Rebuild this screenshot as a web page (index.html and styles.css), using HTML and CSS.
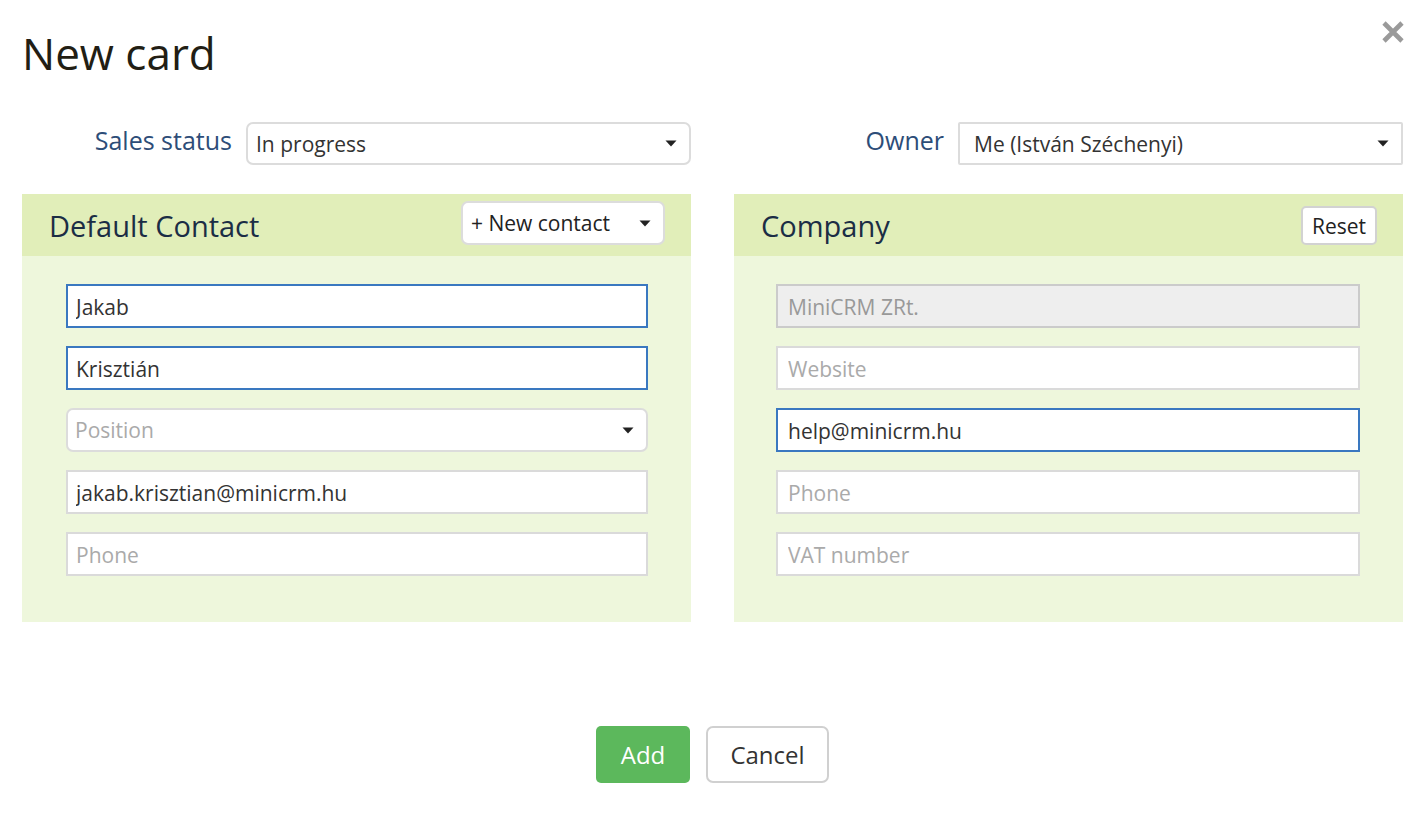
FILE: index.html
```html
<!DOCTYPE html>
<html lang="en">
<head>
<meta charset="utf-8">
<title>New card</title>
<link rel="stylesheet" href="styles.css">
</head>
<body>
<div class="modal">
  <button class="close" aria-label="Close">
    <svg width="24" height="24" viewBox="0 0 24 24"><path d="M3 3 L21 21 M21 3 L3 21" stroke="#9a9a9a" stroke-width="4.6" stroke-linecap="butt"/></svg>
  </button>
  <h1 class="title">New card</h1>

  <div class="top-row">
    <div class="field-group">
      <label class="field-label">Sales status</label>
      <div class="select select-round">
        <span class="select-text">In progress</span>
        <svg class="caret" width="12" height="7" viewBox="0 0 12 7"><path d="M0.5 0.5 H11.5 L6 6.5 Z" fill="#222"/></svg>
      </div>
    </div>
    <div class="field-group">
      <label class="field-label">Owner</label>
      <div class="select select-square">
        <span class="select-text">Me (István Széchenyi)</span>
        <svg class="caret" width="12" height="7" viewBox="0 0 12 7"><path d="M0.5 0.5 H11.5 L6 6.5 Z" fill="#222"/></svg>
      </div>
    </div>
  </div>

  <div class="panels">
    <section class="panel panel-contact">
      <header class="panel-head">
        <h2 class="panel-title">Default Contact</h2>
        <div class="btn-dropdown">
          <span>+ New contact</span>
          <svg class="caret" width="12" height="7" viewBox="0 0 12 7"><path d="M0.5 0.5 H11.5 L6 6.5 Z" fill="#222"/></svg>
        </div>
      </header>
      <div class="panel-body">
        <input class="inp focus" type="text" value="Jakab">
        <input class="inp focus" type="text" value="Krisztián">
        <div class="select select-round inp-select">
          <span class="select-text placeholder">Position</span>
          <svg class="caret" width="12" height="7" viewBox="0 0 12 7"><path d="M0.5 0.5 H11.5 L6 6.5 Z" fill="#222"/></svg>
        </div>
        <input class="inp" type="text" value="jakab.krisztian@minicrm.hu">
        <input class="inp" type="text" placeholder="Phone">
      </div>
    </section>

    <section class="panel panel-company">
      <header class="panel-head">
        <h2 class="panel-title">Company</h2>
        <button class="btn-reset">Reset</button>
      </header>
      <div class="panel-body">
        <input class="inp disabled" type="text" value="MiniCRM ZRt." disabled>
        <input class="inp" type="text" placeholder="Website">
        <input class="inp focus" type="text" value="help@minicrm.hu">
        <input class="inp" type="text" placeholder="Phone">
        <input class="inp" type="text" placeholder="VAT number">
      </div>
    </section>
  </div>

  <div class="actions">
    <button class="btn btn-add">Add</button>
    <button class="btn btn-cancel">Cancel</button>
  </div>
</div>
</body>
</html>
```

FILE: styles.css
```css
* { box-sizing: border-box; }

body {
  margin: 0;
  background: #fff;
  font-family: "Open Sans", "Noto Sans", sans-serif;
  color: #333;
}

.modal {
  position: relative;
  padding: 23px 13px 0 22px;
  width: 1416px;
  height: 816px;
}

.close {
  position: absolute;
  top: 20px;
  right: 11px;
  width: 24px;
  height: 24px;
  padding: 0;
  border: 0;
  background: none;
  display: flex;
}

.title {
  margin: 0;
  font-size: 44px;
  line-height: 60px;
  height: 60px;
  font-weight: 400;
  color: #221e14;
}

.top-row {
  margin-top: 39px;
  display: grid;
  grid-template-columns: 669px 669px;
  column-gap: 43px;
}

.field-group {
  display: flex;
  justify-content: flex-end;
  align-items: center;
  gap: 14px;
}

.field-label {
  font-size: 25px;
  color: #2d4d78;
  margin-bottom: 8px;
}

.select {
  width: 445px;
  height: 43px;
  background: #fff;
  border: 2px solid #dcdcdc;
  display: flex;
  align-items: center;
  justify-content: space-between;
  padding: 0 12px 0 8px;
  font-size: 21px;
  color: #333;
}

.select-round { border-radius: 7px; }
.select-square { border-radius: 2px; padding-left: 14px; }

.select-text.placeholder { color: #aaa; }

.caret { display: block; flex: none; }

.panels {
  margin-top: 29px;
  display: grid;
  grid-template-columns: 669px 669px;
  column-gap: 43px;
}

.panel {
  background: #eef7dc;
  height: 428px;
}

.panel-head {
  height: 62px;
  background: #e1eeb9;
  display: flex;
  align-items: center;
  justify-content: space-between;
  padding: 0 26px 0 27px;
}

.panel-title {
  margin: 0;
  font-size: 29px;
  font-weight: 400;
  color: #1b2d45;
  padding-top: 1px;
}

.btn-dropdown {
  width: 204px;
  height: 44px;
  margin-top: -4px;
  background: #fff;
  border: 2px solid #dcdcdc;
  border-radius: 7px;
  display: flex;
  align-items: center;
  justify-content: space-between;
  padding: 0 12px 0 8px;
  font-size: 21px;
  color: #222;
}

.btn-reset {
  height: 39px;
  padding: 0 9px;
  background: #fff;
  border: 2px solid #d2d2d2;
  border-radius: 5px;
  font-family: inherit;
  font-size: 21px;
  color: #222;
  margin-top: 1px;
}

.panel-body {
  display: flex;
  flex-direction: column;
  gap: 18px;
  padding: 28px 43px 0 44px;
}

.panel-company .panel-body { padding-left: 42px; }

.inp {
  width: 100%;
  height: 44px;
  border: 2px solid #dadada;
  background: #fff;
  padding: 2px 8px 0;
  font-family: inherit;
  font-size: 21px;
  color: #333;
  border-radius: 0;
  outline: none;
}

.panel-company .inp { padding-left: 10px; }

.inp::placeholder { color: #aaa; opacity: 1; }

.inp.focus { border-color: #3a78c0; }

.inp.disabled {
  background: #eeeeee;
  border-color: #cbcbcb;
  color: #999;
}

.inp-select {
  width: 100%;
  height: 44px;
  padding-left: 7px;
}

.actions {
  margin-top: 104px;
  display: flex;
  justify-content: center;
  gap: 16px;
}

.btn {
  height: 57px;
  font-family: inherit;
  font-size: 24px;
  border-radius: 5px;
}

.btn-add {
  width: 94px;
  background: #5cb85c;
  border: 0;
  color: #fff;
}

.btn-cancel {
  width: 123px;
  background: #fff;
  border: 2px solid #d0d0d0;
  border-radius: 7px;
  color: #333;
}
```
